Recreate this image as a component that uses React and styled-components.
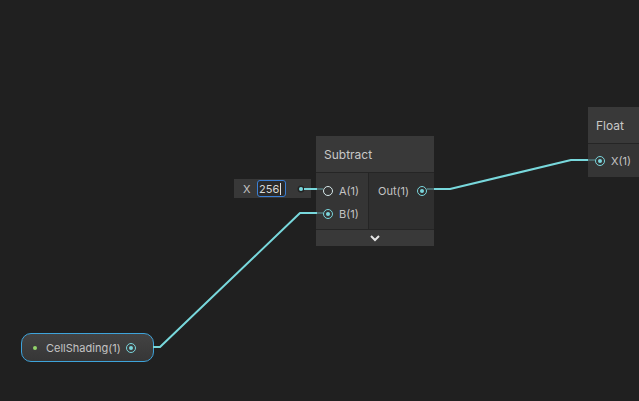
import React from "react";
import styled, { createGlobalStyle } from "styled-components";

const Global = createGlobalStyle`
  html, body { margin: 0; padding: 0; background: #202020; }
  body { font-family: Inter, "Noto Sans", "DejaVu Sans", sans-serif; }
  #root { width: 639px; height: 401px; }
`;

const Canvas = styled.div`
  position: relative;
  width: 639px;
  height: 401px;
  overflow: hidden;
  background: #202020;
  color: #c4c4c4;
`;

const Wires = styled.svg`
  position: absolute;
  left: 0;
  top: 0;
  width: 639px;
  height: 401px;
  pointer-events: none;
  z-index: 2;
`;

const Node = styled.div`
  position: absolute;
  left: ${(p) => p.$x}px;
  top: ${(p) => p.$y}px;
  width: ${(p) => p.$w}px;
  display: flex;
  flex-direction: column;
  background: #393939;
  z-index: 1;
`;

const Header = styled.div`
  height: 36px;
  display: flex;
  align-items: center;
  padding-left: 8px;
  font-size: 12px;
  color: #c8c8c8;
  border-bottom: 1px solid #252525;
  box-sizing: border-box;
  height: 37px;
`;

const Body = styled.div`
  display: flex;
  height: ${(p) => p.$h}px;
`;

const Inputs = styled.div`
  width: 53px;
  box-sizing: border-box;
  border-right: 1px solid #252525;
  background: #353535;
  display: flex;
  flex-direction: column;
  padding-top: 6px;
`;

const Outputs = styled.div`
  flex: 1;
  background: #2f2f2f;
  display: flex;
  flex-direction: column;
  padding-top: 6px;
`;

const PortRow = styled.div`
  height: 23px;
  display: flex;
  align-items: center;
  gap: 6px;
  padding: ${(p) => (p.$out ? "0 7px 0 9px" : "0 0 0 7px")};
  justify-content: ${(p) => (p.$out ? "space-between" : "flex-start")};
  font-size: 11px;
  color: #c4c4c4;
`;

const Port = styled.span`
  width: 10px;
  height: 10px;
  box-sizing: border-box;
  border-radius: 50%;
  border: 1.5px solid ${(p) => (p.$hollow ? "#d6e8ea" : "#7ad6dc")};
  display: flex;
  align-items: center;
  justify-content: center;
  flex: none;
  &::after {
    content: "";
    display: ${(p) => (p.$hollow ? "none" : "block")};
    width: 4px;
    height: 4px;
    border-radius: 50%;
    background: #7ad6dc;
  }
`;

const Footer = styled.div`
  height: 17px;
  border-top: 1px solid #252525;
  box-sizing: border-box;
  display: flex;
  align-items: center;
  justify-content: center;
  background: #393939;
`;

const FloatBody = styled.div`
  height: 33px;
  background: #353535;
  display: flex;
  align-items: center;
`;

const InlineField = styled.div`
  position: absolute;
  left: 234px;
  top: 179px;
  width: 77px;
  height: 19px;
  background: #383838;
  display: flex;
  align-items: center;
  padding-left: 9px;
  box-sizing: border-box;
  font-size: 11px;
  color: #c4c4c4;
  z-index: 1;
`;

const FieldLabel = styled.span`
  width: 14px;
`;

const TextBox = styled.div`
  width: 29px;
  height: 17px;
  box-sizing: border-box;
  border: 1px solid #3b7fd4;
  border-radius: 3px;
  background: #2a2a2a;
  display: flex;
  align-items: center;
  padding-left: 1px;
  font-size: 11px;
  color: #d8d8d8;
`;

const Caret = styled.span`
  display: inline-block;
  width: 1px;
  height: 12px;
  background: #e0e0e0;
  margin-left: 1px;
`;

const InlineDot = styled.span`
  margin-left: 13px;
  width: 4px;
  height: 4px;
  border-radius: 50%;
  background: #7ad6dc;
  box-shadow: 0 0 0 1.5px #232323;
`;

const Pill = styled.div`
  position: absolute;
  left: 21px;
  top: 333px;
  width: 133px;
  height: 29px;
  box-sizing: border-box;
  border: 1px solid #3ea3da;
  border-radius: 10px;
  background: linear-gradient(#434343, #363636);
  display: flex;
  align-items: center;
  padding-left: 11px;
  padding-right: 17px;
  font-size: 11px;
  color: #c4c4c4;
  z-index: 1;
`;

const GreenDot = styled.span`
  width: 4px;
  height: 4px;
  border-radius: 50%;
  background: #93d46b;
  margin-right: 9px;
`;

const PillLabel = styled.span`
  flex: 1;
`;

export default function App() {
  return (
    <>
      <Global />
      <Canvas>
        <InlineField>
          <FieldLabel>X</FieldLabel>
          <TextBox>
            256<Caret />
          </TextBox>
          <InlineDot />
        </InlineField>

        <Node $x={316} $y={136} $w={118}>
          <Header>Subtract</Header>
          <Body $h={56}>
            <Inputs>
              <PortRow>
                <Port $hollow />
                A(1)
              </PortRow>
              <PortRow>
                <Port />
                B(1)
              </PortRow>
            </Inputs>
            <Outputs>
              <PortRow $out>
                Out(1)
                <Port />
              </PortRow>
            </Outputs>
          </Body>
          <Footer>
            <svg width="12" height="8" viewBox="0 0 12 8">
              <path d="M2 2 L6 6 L10 2" fill="none" stroke="#e6e6e6" strokeWidth="2" />
            </svg>
          </Footer>
        </Node>

        <Node $x={588} $y={107} $w={60}>
          <Header>Float</Header>
          <FloatBody>
            <PortRow>
              <Port />
              X(1)
            </PortRow>
          </FloatBody>
        </Node>

        <Pill>
          <GreenDot />
          <PillLabel>CellShading(1)</PillLabel>
          <Port />
        </Pill>

        <Wires viewBox="0 0 639 401">
          <g fill="none" strokeWidth="2" strokeLinejoin="round">
            <polyline points="153,347 160,347 300,213 317,213" stroke="#78d8dc" />
            <line x1="317" y1="213" x2="323" y2="213" stroke="#4a6a6c" />
            <polyline points="304,189 317,189" stroke="#78d8dc" />
            <line x1="317" y1="189" x2="323" y2="189" stroke="#4a6a6c" />
            <line x1="427" y1="189" x2="434" y2="189" stroke="#4a6a6c" />
            <polyline points="434,189 450,189 571,160 588,160" stroke="#78d8dc" />
            <line x1="588" y1="160" x2="595" y2="160" stroke="#4a6a6c" />
          </g>
        </Wires>
      </Canvas>
    </>
  );
}
